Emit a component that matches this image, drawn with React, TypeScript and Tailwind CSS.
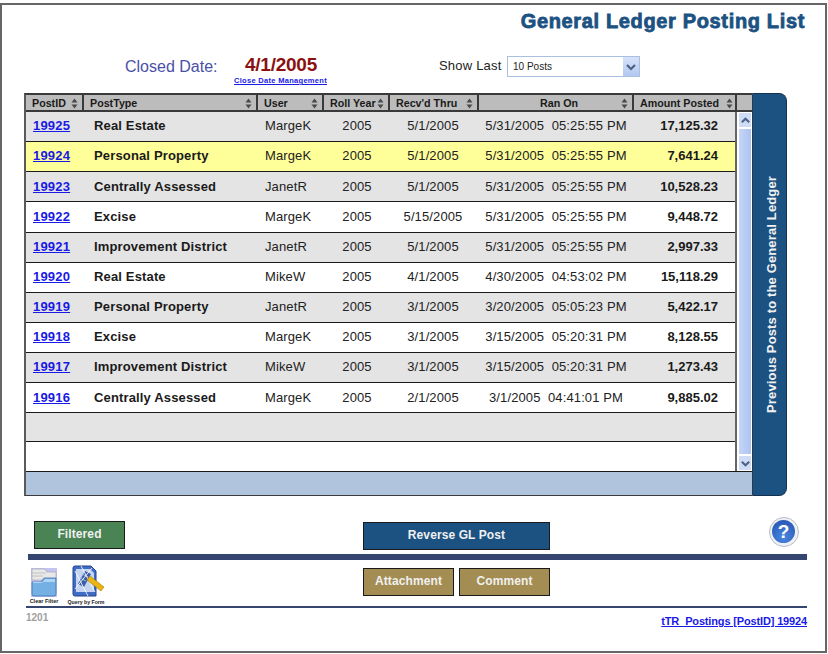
import React from 'react';

// Grid shared by the header and the rows
const COLS = 'grid grid-cols-[58px_174px_66px_66px_89px_155px_101px]';

interface Post {
  id: string;
  type: string;
  user: string;
  year: string;
  thru: string;
  ran: string;
  amount: string;
}

const POSTS: Post[] = [
  { id: '19925', type: 'Real Estate', user: 'MargeK', year: '2005', thru: '5/1/2005', ran: '5/31/2005  05:25:55 PM', amount: '17,125.32' },
  { id: '19924', type: 'Personal Property', user: 'MargeK', year: '2005', thru: '5/1/2005', ran: '5/31/2005  05:25:55 PM', amount: '7,641.24' },
  { id: '19923', type: 'Centrally Assessed', user: 'JanetR', year: '2005', thru: '5/1/2005', ran: '5/31/2005  05:25:55 PM', amount: '10,528.23' },
  { id: '19922', type: 'Excise', user: 'MargeK', year: '2005', thru: '5/15/2005', ran: '5/31/2005  05:25:55 PM', amount: '9,448.72' },
  { id: '19921', type: 'Improvement District', user: 'JanetR', year: '2005', thru: '5/1/2005', ran: '5/31/2005  05:25:55 PM', amount: '2,997.33' },
  { id: '19920', type: 'Real Estate', user: 'MikeW', year: '2005', thru: '4/1/2005', ran: '4/30/2005  04:53:02 PM', amount: '15,118.29' },
  { id: '19919', type: 'Personal Property', user: 'JanetR', year: '2005', thru: '3/1/2005', ran: '3/20/2005  05:05:23 PM', amount: '5,422.17' },
  { id: '19918', type: 'Excise', user: 'MargeK', year: '2005', thru: '3/1/2005', ran: '3/15/2005  05:20:31 PM', amount: '8,128.55' },
  { id: '19917', type: 'Improvement District', user: 'MikeW', year: '2005', thru: '3/1/2005', ran: '3/15/2005  05:20:31 PM', amount: '1,273.43' },
  { id: '19916', type: 'Centrally Assessed', user: 'MargeK', year: '2005', thru: '2/1/2005', ran: '3/1/2005  04:41:01 PM', amount: '9,885.02' },
];

const SortArrows = () => (
  <svg width="7" height="11" viewBox="0 0 7 11" className="shrink-0">
    <path d="M3.5 0.5 L6.5 4.5 H0.5 Z M3.5 10.5 L0.5 6.5 H6.5 Z" fill="#4a4a4a" />
  </svg>
);

const HeaderCell = ({ label, center, last }: { label: string; center?: boolean; last?: boolean }) => (
  <div className={`flex items-center justify-between pl-[6px] h-full ${last ? 'pr-[2px]' : 'pr-[4px] border-r-2 border-[#3a3a3a]'}`}>
    <span className={`text-[10.7px] leading-[16px] font-bold text-[#1a1a1a] whitespace-nowrap ${center ? 'flex-1 text-center pl-[12px]' : ''}`}>{label}</span>
    <SortArrows />
  </div>
);

const Chevron = ({ up, size = 12 }: { up?: boolean; size?: number }) => (
  <svg width={size} height={size} viewBox="0 0 12 12">
    <path d={up ? 'M2 8 L6 4 L10 8' : 'M2 4 L6 8 L10 4'} fill="none" stroke="#4d6185" strokeWidth="2.2" />
  </svg>
);

const Row = ({ post, index }: { post: Post; index: number }) => {
  const selected = post.id === '19924';
  const bg = selected ? 'bg-[#ffff99]' : index % 2 === 0 ? 'bg-[#e4e4e4]' : 'bg-white';
  return (
    <div className={`${COLS} ${bg} h-[30.15px] pb-[1px] border-b border-[#1a1a1a] items-center text-[13px] text-[#222] tracking-[0.12px]`}>
      <a className="pl-[7px] font-bold text-[#1a1ae6] underline tracking-[0.2px]">{post.id}</a>
      <div className="pl-[10px] font-bold text-[#1a1a1a] tracking-[0.15px]">{post.type}</div>
      <div className="pl-[7px]">{post.user}</div>
      <div className="text-center">{post.year}</div>
      <div className="text-center pr-[3px]">{post.thru}</div>
      <div className="text-center whitespace-pre pr-[1px]">{post.ran}</div>
      <div className="text-right pr-[17px] font-bold text-[#1a1a1a] tracking-normal">{post.amount}</div>
    </div>
  );
};

const FolderIcon = () => (
  <svg width="26" height="29" viewBox="0 0 26 29">
    <rect width="26" height="29" fill="#c4c4f4" />
    <path d="M1 1 H14 L16 4 H25 V12 H1 Z" fill="#e8e8e8" stroke="#a0a0a0" strokeWidth="0.6" />
    <path d="M1 5 H15 M1 8 H12" stroke="#b8b8b8" strokeWidth="0.8" />
    <path d="M1 14 H10 L13 10 H25 V26 Q25 28 23 28 H3 Q1 28 1 26 Z" fill="#74b0e4" stroke="#3f73b0" strokeWidth="0.8" />
    <path d="M2 15 H11 L14 11 H24 V14 H2 Z" fill="#aed6f4" />
  </svg>
);

const QueryIcon = () => (
  <svg width="34" height="33" viewBox="0 0 34 33">
    <path d="M2 3 Q2 1 4 1 H20 L25 6 V31 H4 Q2 31 2 29 Z" fill="#3f6cc4" stroke="#23448f" strokeWidth="1" />
    <path d="M5 4 H19 L23 8 V27 H5 Z" fill="#c4d4f2" />
    <path d="M7 19 L14 6 L20 9 L13 22 Z" fill="#3a5fa8" />
    <path d="M9 13 L15 16 M11 9 L17 12" stroke="#a8bce4" strokeWidth="1" />
    <path d="M4 6 L17 31 M10 1 L24 27 M21 3 L4 24" stroke="#fff" strokeWidth="1" opacity="0.85" />
    <path d="M16 15 L19 11 L33 22 L30 26 Z" fill="#eab412" stroke="#a87c08" strokeWidth="0.6" />
  </svg>
);

const HelpIcon = () => (
  <svg width="30" height="30" viewBox="0 0 30 30">
    <defs>
      <radialGradient id="helpBlue" cx="0.5" cy="0.75" r="0.7">
        <stop offset="0" stopColor="#4a86e0" />
        <stop offset="1" stopColor="#2a5cb8" />
      </radialGradient>
    </defs>
    <circle cx="15" cy="15" r="14.5" fill="#eef1f5" stroke="#b5bcc8" />
    <circle cx="14.5" cy="14.5" r="11.5" fill="url(#helpBlue)" />
    <text x="14.5" y="21" textAnchor="middle" fontSize="19" fontWeight="700" fill="#fff" fontFamily="'Liberation Sans', sans-serif">?</text>
  </svg>
);

const ActionButton = ({ label, className }: { label: string; className: string }) => (
  <button className={`h-[28px] border border-[#1a1a1a] text-[12px] font-bold text-[#f0f0f0] tracking-[0.1px] pb-[2px] ${className}`}>
    {label}
  </button>
);

export default function App() {
  return (
    <div className="w-[828px] h-[654px] bg-white pt-[3px] font-['Liberation_Sans',Arial,sans-serif]">
      <div className="w-[827px] h-[650px] border-2 border-[#666] flex flex-col">
        {/* Title */}
        <div className="h-[36px] pt-[3px] pr-[20px] text-right text-[20px] leading-[26px] font-bold text-[#1c5282] tracking-[0.65px] [-webkit-text-stroke:0.8px_#1c5282]">
          General Ledger Posting List
        </div>

        {/* Closed date and filter */}
        <div className="h-[52px] flex">
          <div className="w-[123px]" />
          <div className="w-[109px] pt-[16px] text-[16px] leading-[20px] text-[#4a50a8] whitespace-nowrap">Closed Date:</div>
          <div className="w-[205px] flex flex-col">
            <div className="pl-[11px] pt-[12px] text-[19px] leading-[24px] font-bold text-[#8b1010] tracking-[-0.25px]">4/1/2005</div>
            <a className="-mt-[1px] text-[7.5px] leading-[9px] font-bold text-[#1a1ae6] underline tracking-[0.3px] whitespace-nowrap">Close Date Management</a>
          </div>
          <div className="w-[68px] pt-[16px] text-[13px] leading-[18px] text-[#222] tracking-[0.2px] whitespace-nowrap">Show Last</div>
          <div className="mt-[15px] h-[21px] w-[133px] border border-[#aac0e0] flex items-center justify-between pl-[5px] bg-white">
            <span className="text-[10px] text-[#222]">10 Posts</span>
            <div className="w-[16px] h-[19px] bg-gradient-to-b from-[#d6e2fa] to-[#b2c8f0] flex items-center justify-center">
              <Chevron />
            </div>
          </div>
        </div>

        {/* Posting table */}
        <div className="ml-[22px] w-[763px] h-[403px] flex">
          <div className="w-[728px] flex flex-col border-2 border-[#3a3a3a] border-l-[#5a5a5a] border-r-0 border-b-[1.5px] bg-white">
            <div className="flex h-[17px] shrink-0 bg-[#bcbcbc] border-b-2 border-[#3a3a3a]">
              <div className={`${COLS} h-full`}>
                <HeaderCell label="PostID" />
                <HeaderCell label="PostType" />
                <HeaderCell label="User" />
                <HeaderCell label="Roll Year" />
                <HeaderCell label="Recv'd Thru" />
                <HeaderCell label="Ran On" center />
                <HeaderCell label="Amount Posted" last />
              </div>
              <div className="flex-1 border-l-2 border-[#3a3a3a]" />
            </div>
            <div className="flex h-[359px] shrink-0">
              <div className="w-[711px] shrink-0 border-r-2 border-[#666]">
                {POSTS.map((post, i) => (
                  <Row key={post.id} post={post} index={i} />
                ))}
                <div className="h-[29px] bg-[#e4e4e4] border-b border-[#1a1a1a]" />
                <div className="h-[29px] bg-white" />
              </div>
              {/* Scrollbar */}
              <div className="w-[16px] bg-white flex flex-col items-center px-[1px]">
                <div className="h-[16px] w-full bg-[#cfdcf6] border border-white flex items-center justify-center"><Chevron up size={11} /></div>
                <div className="flex-1 w-[14px] bg-gradient-to-r from-[#c6d5f8] to-[#aec3f0] border border-white" />
                <div className="h-[16px] w-full bg-[#cfdcf6] border border-white flex items-center justify-center"><Chevron size={11} /></div>
              </div>
            </div>
            <div className="flex-1 bg-[#b0c4de] border-t border-[#1a1a1a]" />
          </div>
          <div className="w-[35px] bg-[#1c5282] rounded-tr-[8px] rounded-br-[8px] border border-[#14304f] border-l-[#2b3a52] flex items-center justify-center">
            <span className="ml-[5px] [writing-mode:vertical-rl] rotate-180 text-[13px] font-bold text-[#f0f0f0] tracking-[0.14px] whitespace-nowrap">
              Previous Posts to the General Ledger
            </span>
          </div>
        </div>

        {/* Primary actions */}
        <div className="mt-[25px] h-[29px] flex items-center">
          <ActionButton label="Filtered" className="ml-[32px] mb-[2px] w-[91px] bg-[#4a8354]" />
          <ActionButton label="Reverse GL Post" className="ml-[238px] w-[187px] bg-[#1c5282]" />
          <div className="ml-[219px] mb-[8px] h-[30px]"><HelpIcon /></div>
        </div>

        <div className="ml-[26px] mt-[4px] w-[779px] h-[6px] shrink-0 bg-[#34466f]" />

        {/* Secondary actions */}
        <div className="h-[46px] flex shrink-0">
          <div className="ml-[27px] flex flex-col items-center w-[30px]">
            <div className="mt-[8px] h-[29px]"><FolderIcon /></div>
            <span className="text-[5.5px] leading-[8px] font-bold text-[#222] whitespace-nowrap">Clear Filter</span>
          </div>
          <div className="ml-[7px] flex flex-col items-center w-[40px]">
            <div className="mt-[5px] ml-[4px] h-[33px]"><QueryIcon /></div>
            <span className="text-[5.2px] leading-[8px] font-bold text-[#222] whitespace-nowrap">Query by Form</span>
          </div>
          <div className="ml-[257px] mt-[8px] flex gap-[5px] h-[28px]">
            <ActionButton label="Attachment" className="w-[91px] bg-[#a38d52]" />
            <ActionButton label="Comment" className="w-[91px] bg-[#a38d52]" />
          </div>
        </div>

        <div className="ml-[24px] w-[781px] h-[2px] shrink-0 bg-[#34466f]" />

        {/* Footer */}
        <div className="flex justify-between pl-[24px] pr-[18px] pt-[3px]">
          <span className="text-[10px] leading-[14px] font-bold text-[#a0a0a0]">1201</span>
          <a className="text-[11px] leading-[16px] mt-[2px] font-bold text-[#1a1ae6] underline tracking-[-0.15px]">tTR_Postings [PostID] 19924</a>
        </div>
      </div>
    </div>
  );
}
